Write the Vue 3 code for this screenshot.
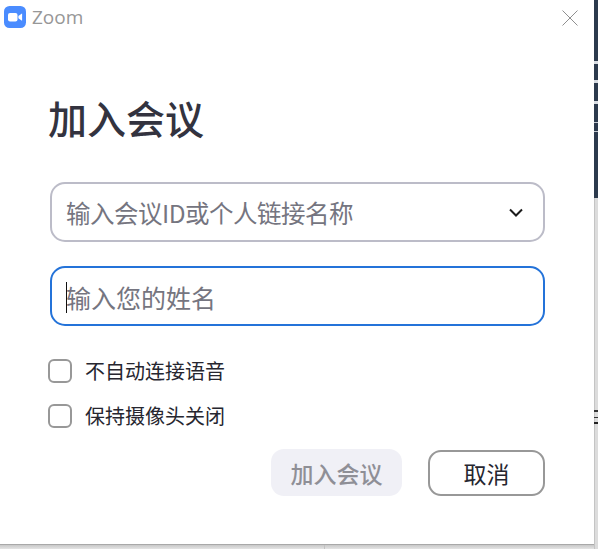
<script setup>
const options = ['不自动连接语音', '保持摄像头关闭']
</script>

<template>
  <div class="page">
    <div class="dialog">
      <header class="titlebar">
        <div class="brand">
          <svg class="logo" viewBox="0 0 22 22" width="22" height="22">
            <rect width="22" height="22" rx="5.5" fill="#4a8cff" />
            <rect x="4" y="7" width="9.5" height="8.4" rx="2" fill="#fff" />
            <path d="M14.4 10l3.2-2.3c.3-.2.5-.1.5.3v6.3c0 .4-.2.5-.5.3l-3.2-2.3z" fill="#fff" />
          </svg>
          <span class="app-name">Zoom</span>
        </div>
        <svg class="close" viewBox="0 0 16 16" width="16" height="16">
          <path d="M.5.5l15 15M15.5.5l-15 15" stroke="#8f8f8f" stroke-width="1" fill="none" />
        </svg>
      </header>

      <main class="content">
        <h1 class="title">加入会议</h1>

        <div class="field">
          <span class="placeholder compact">输入会议ID或个人链接名称</span>
          <svg class="chevron" viewBox="0 0 14 9" width="14" height="9">
            <path d="M1 1.5l6 6 6-6" stroke="#1c1c1c" stroke-width="2" fill="none" />
          </svg>
        </div>

        <div class="field focused">
          <span class="caret"></span>
          <span class="placeholder">输入您的姓名</span>
        </div>

        <div class="options">
          <label v-for="option in options" :key="option" class="option">
            <span class="box"></span>
            <span class="option-text">{{ option }}</span>
          </label>
        </div>

        <div class="actions">
          <button class="btn join" type="button">加入会议</button>
          <button class="btn cancel" type="button">取消</button>
        </div>
      </main>
    </div>
    <div class="backdrop">
      <div class="dark"></div>
      <div class="light"></div>
    </div>
  </div>
</template>

<style scoped>
.page {
  width: 598px;
  height: 549px;
  display: flex;
  overflow: hidden;
  background:
    linear-gradient(to right, transparent 324px, #c2c2c2 324px, #c2c2c2 325px, transparent 325px),
    linear-gradient(to bottom, #c8c8c8 545px, #e4e4e4 549px);
  font-family: "Noto Sans CJK SC", "Liberation Sans", sans-serif;
}
.dialog {
  width: 594px;
  height: 545px;
  flex: none;
  box-sizing: border-box;
  background: #fff;
  border-bottom: 1px solid #a9a9a9;
  display: flex;
  flex-direction: column;
}
.titlebar {
  height: 34px;
  padding: 6px 16px 0 4px;
  display: flex;
  align-items: flex-start;
  justify-content: space-between;
  box-sizing: border-box;
}
.brand {
  display: flex;
  align-items: center;
  gap: 6px;
}
.app-name {
  font-family: "Open Sans", "Liberation Sans", sans-serif;
  font-size: 19px;
  line-height: 22px;
  color: #979797;
}
.close {
  margin-top: 4px;
}
.content {
  padding: 55px 37px 0 48px;
  display: flex;
  flex-direction: column;
}
.title {
  margin: 0 0 37px;
  font-size: 39px;
  line-height: 56px;
  font-weight: 500;
  color: #33333f;
}
.field {
  width: 495px;
  height: 60px;
  margin-left: 2px;
  margin-bottom: 24px;
  padding: 2px 20px 0 14px;
  box-sizing: border-box;
  border: 2px solid #bcbcc8;
  border-radius: 15px;
  display: flex;
  align-items: center;
  justify-content: space-between;
  position: relative;
}
.focused {
  border-color: #2473d9;
  margin-bottom: 0;
}
.placeholder {
  font-size: 25px;
  line-height: 34px;
  color: #757580;
}
.compact {
  font-size: 24.5px;
  letter-spacing: -0.5px;
}
.chevron {
  margin-top: -2px;
}
.caret {
  position: absolute;
  left: 14px;
  top: 14px;
  width: 1px;
  height: 31px;
  background: #111;
}
.options {
  margin-top: 33px;
  display: flex;
  flex-direction: column;
  gap: 21px;
}
.option {
  display: flex;
  align-items: center;
  gap: 13px;
  height: 24px;
}
.box {
  width: 24px;
  height: 24px;
  box-sizing: border-box;
  border: 2px solid #989898;
  border-radius: 6px;
}
.option-text {
  font-size: 20px;
  line-height: 24px;
  color: #26262f;
}
.actions {
  margin-top: 21px;
  margin-left: 223px;
  display: flex;
  align-items: flex-start;
  gap: 26px;
}
.btn {
  height: 47px;
  padding: 0;
  font-family: inherit;
  font-size: 23px;
  border-radius: 13px;
}
.join {
  width: 131px;
  border: 0;
  background: #f0f0f6;
  color: #8f8f96;
  font-weight: 500;
}
.cancel {
  width: 117px;
  height: 46px;
  margin-top: 1px;
  background: #fff;
  border: 2px solid #989898;
  color: #26262f;
}
.backdrop {
  flex: 1;
  display: flex;
  flex-direction: column;
}
.dark {
  height: 198px;
  background: linear-gradient(
    to bottom,
    #2c3a4d 61px, #d8dce2 61px, #d8dce2 64px,
    #2c3a4d 64px, #2c3a4d 80px, #d8dce2 80px, #d8dce2 83px,
    #2c3a4d 83px, #2c3a4d 101px, #d8dce2 101px, #d8dce2 104px,
    #2c3a4d 104px, #2c3a4d 122px, #c4c9d0 122px, #c4c9d0 123px,
    #2c3a4d 123px, #2c3a4d 131px, #c4c9d0 131px, #c4c9d0 132px,
    #2c3a4d 132px
  );
}
.light {
  flex: 1;
  background:
    linear-gradient(
      to bottom,
      transparent 212px, #333 212px, #333 214px,
      transparent 214px, transparent 219px, #333 219px, #333 220px,
      transparent 220px, transparent 224px, #222 224px, #222 226px,
      transparent 226px
    ),
    linear-gradient(to right, #c4c4c4 1px, #dcdcdc 1px);
}
</style>

<style>
html, body { margin: 0; background: #fff; }
</style>
